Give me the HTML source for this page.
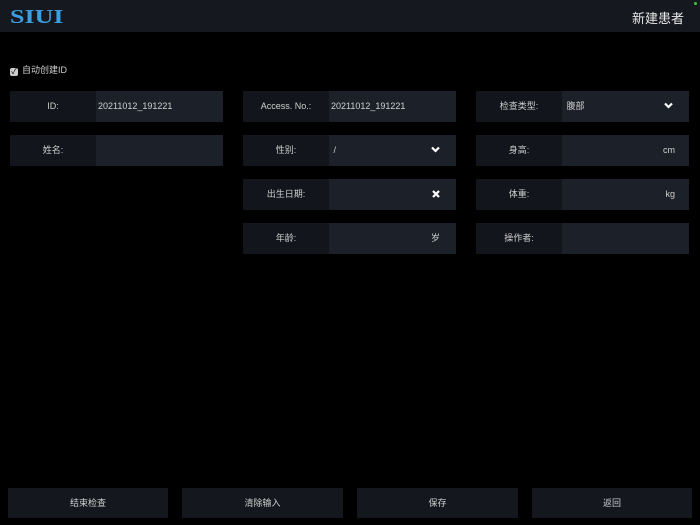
<!DOCTYPE html><html><head><meta charset="utf-8"><style>
*{margin:0;padding:0;box-sizing:border-box}
body{width:700px;height:525px;background:#000;position:relative;overflow:hidden;font-family:"Liberation Sans","Noto Sans CJK SC",sans-serif;color:#cfcfcf}
.hd{position:absolute;left:0;top:0;width:700px;height:32px;background:#15181f}
.logo{position:absolute;left:10px;top:6px;font-family:"Liberation Serif",serif;font-weight:900;font-size:20px;color:#3a9ee0;transform:scaleX(1.3);transform-origin:left}
.ttl{position:absolute;right:16px;top:8px;font-size:13px;color:#e8e8e8}
.dot{position:absolute;right:3px;top:2px;width:3px;height:3px;background:#3c3;border-radius:50%}
.ck{position:absolute;left:10px;top:63px;font-size:9px}
.ck span{display:inline-block;width:8px;height:8px;background:#ccc;border-radius:2px;margin-right:4px;vertical-align:-1px;color:#000;font-size:8px;line-height:8px;text-align:center}
.f{position:absolute;height:31px;font-size:9px}
.l{position:absolute;left:0;top:0;width:86px;height:31px;background:#12151b;text-align:center;line-height:31px}
.i{position:absolute;left:86px;top:0;width:127px;height:31px;background:#1c2129;line-height:31px;padding-left:2px}
.r{position:absolute;right:10px;top:0}
svg.r{top:11px}
.b{position:absolute;top:488px;height:30px;background:#14171e;text-align:center;line-height:30px;font-size:9px}
</style></head><body>
<div class="hd"><div class="logo">SIUI</div><div class="ttl">新建患者</div><div class="dot"></div></div>
<div class="ck"><span>✓</span>自动创建ID</div>
<div class="f" style="left:10px;top:91px"><div class="l">ID:</div><div class="i">20211012_191221</div></div>
<div class="f" style="left:10px;top:135px"><div class="l">姓名:</div><div class="i"></div></div>
<div class="f" style="left:243px;top:91px"><div class="l">Access. No.:</div><div class="i">20211012_191221</div></div>
<div class="f" style="left:243px;top:135px"><div class="l">性别:</div><div class="i">&nbsp;/<svg class="r" style="right:16px" width="9" height="7" viewBox="0 0 9 7"><path d="M1 1.5L4.5 5L8 1.5" stroke="#fff" stroke-width="2.2" fill="none"/></svg></div></div>
<div class="f" style="left:243px;top:179px"><div class="l">出生日期:</div><div class="i"><svg class="r" style="right:16px" width="8" height="8" viewBox="0 0 8 8"><path d="M1 1L7 7M7 1L1 7" stroke="#fff" stroke-width="2.2"/></svg></div></div>
<div class="f" style="left:243px;top:223px"><div class="l">年龄:</div><div class="i"><span class="r" style="right:16px">岁</span></div></div>
<div class="f" style="left:476px;top:91px"><div class="l">检查类型:</div><div class="i">&nbsp;腹部<svg class="r" style="right:16px" width="9" height="7" viewBox="0 0 9 7"><path d="M1 1.5L4.5 5L8 1.5" stroke="#fff" stroke-width="2.2" fill="none"/></svg></div></div>
<div class="f" style="left:476px;top:135px"><div class="l">身高:</div><div class="i"><span class="r" style="right:14px">cm</span></div></div>
<div class="f" style="left:476px;top:179px"><div class="l">体重:</div><div class="i"><span class="r" style="right:14px">kg</span></div></div>
<div class="f" style="left:476px;top:223px"><div class="l">操作者:</div><div class="i"></div></div>
<div class="b" style="left:8px;width:160px">结束检查</div>
<div class="b" style="left:182px;width:161px">清除输入</div>
<div class="b" style="left:357px;width:161px">保存</div>
<div class="b" style="left:532px;width:160px">返回</div>
</body></html>
